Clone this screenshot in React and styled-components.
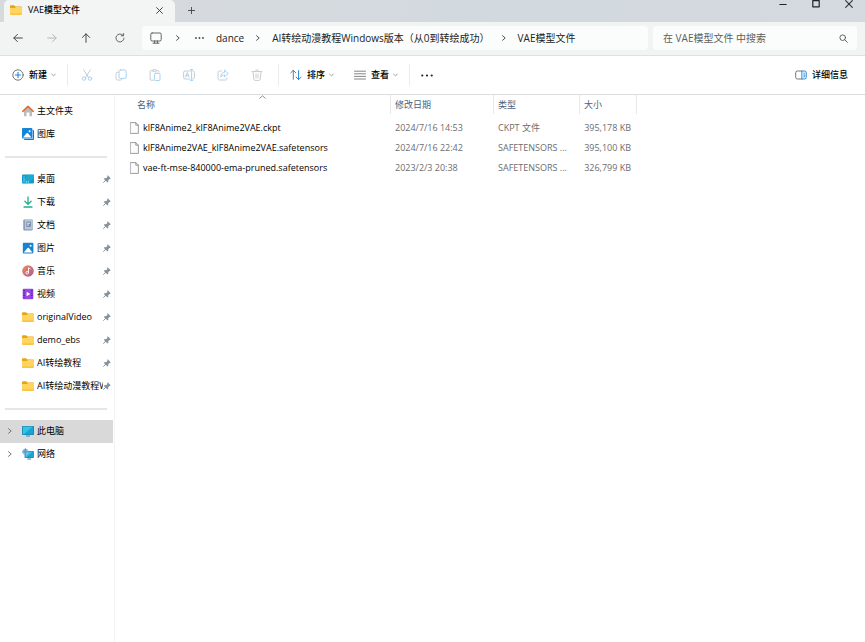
import React from "react";
import styled, { createGlobalStyle } from "styled-components";

const GlobalStyle = createGlobalStyle`
  * { box-sizing: border-box; }
  html, body { margin: 0; background: #fff; }
  body, button, input {
    font-family: "Open Sans", "Noto Sans CJK SC", sans-serif;
    font-size: 9px;
    line-height: 14px;
    color: #000;
  }
  button { border: 0; padding: 0; background: none; }
  svg { display: block; flex: none; }
`;

const Window = styled.div`
  display: flex;
  flex-direction: column;
  min-height: 100vh;
`;

const TitleBar = styled.header`
  display: flex;
  height: 22px;
  padding-left: 4px;
  background: linear-gradient(90deg, #d7dadc, #d2d9df 60%, #d5d9e0);
`;

const Tab = styled.div`
  display: flex;
  align-items: center;
  width: 171px;
  padding: 0 10px 2px 6px;
  gap: 6px;
  background: #f3f4f4;
  border-radius: 5px 5px 0 0;
  font-weight: 500;
`;

const TabTitle = styled.span`
  flex: 1;
  white-space: nowrap;
`;

const TabButton = styled.button`
  display: grid;
  place-items: center;
  width: ${(p) => p.$width}px;
  height: 20px;
`;

const WindowControls = styled.div`
  display: flex;
  height: 8px;
  margin-left: auto;
`;

const WindowButton = styled.button`
  display: grid;
  place-items: center;
  width: 33px;
  height: 8px;
`;

const NavBar = styled.nav`
  display: flex;
  align-items: center;
  gap: 5px;
  height: 34px;
  padding: 0 8px 1px 1px;
  background: #f2f4f4;
  border-bottom: 1px solid #dde1e4;
`;

const NavButtons = styled.div`
  display: flex;
`;

const NavButton = styled.button`
  display: grid;
  place-items: center;
  width: 34px;
  height: 24px;
`;

const AddressBar = styled.div`
  display: flex;
  align-items: center;
  flex: 1;
  min-width: 0;
  height: 24px;
  padding-left: 8px;
  overflow: hidden;
  background: #fbfdfc;
  border-radius: 4px;
`;

const Crumb = styled.a`
  color: #222;
  font-size: 10px;
  text-decoration: none;
  white-space: nowrap;
`;

const CrumbArrow = styled.span`
  display: grid;
  place-items: center;
  width: ${(p) => p.$width || 28}px;
  flex: none;
`;

const SearchBox = styled.label`
  display: flex;
  align-items: center;
  flex: 0 0 204px;
  height: 24px;
  padding: 0 9px 0 10px;
  background: #fbfdfc;
  border-radius: 4px;
`;

const SearchInput = styled.input`
  flex: 1;
  min-width: 0;
  padding: 0;
  border: 0;
  outline: 0;
  background: none;
  font-size: 10px;
  &::placeholder { color: #5d5d5d; opacity: 1; }
`;

const Toolbar = styled.div`
  display: flex;
  align-items: center;
  height: 39px;
  padding: 0 17px 0 12px;
  border-bottom: 1px solid #dadde0;
`;

const MenuButton = styled.button`
  display: flex;
  align-items: center;
  gap: 4px;
  height: 24px;
  margin-right: ${(p) => p.$after || 0}px;
  font-weight: 500;
  white-space: nowrap;
  & > svg:first-child { margin-right: 1px; }
`;

const ToolDivider = styled.span`
  width: 1px;
  height: 22px;
  margin-right: ${(p) => p.$after}px;
  background: #ececec;
`;

const ToolGroup = styled.div`
  display: flex;
  margin-right: 4px;
`;

const ToolButton = styled.button`
  display: grid;
  place-items: center;
  width: 34px;
  height: 24px;
`;

const Spacer = styled.div`
  flex: 1;
`;

const Body = styled.div`
  display: flex;
  flex: 1;
`;

const Sidebar = styled.aside`
  flex: none;
  width: 115px;
  padding: 5px 1px 5px 0;
  border-right: 1px solid #f4f4f4;
`;

const SideRow = styled.a`
  display: grid;
  grid-template-columns: 15px 15px minmax(0, 1fr) 8px;
  align-items: center;
  height: 23px;
  padding: 0 2px 1px 7px;
  background: ${(p) => (p.$selected ? "#d9d9d9" : "transparent")};
  color: #000;
  text-decoration: none;
`;

const SideLabel = styled.span`
  overflow: hidden;
  white-space: nowrap;
`;

const SideDivider = styled.hr`
  height: 2px;
  margin: 10px 6px 10px 5px;
  border: 0;
  background: #e6e6e6;
`;

const Main = styled.main`
  flex: 1;
  min-width: 0;
`;

const FileTable = styled.table`
  width: 100%;
  table-layout: fixed;
  border-collapse: collapse;
`;

const Column = styled.col`
  width: ${(p) => (p.$width ? `${p.$width}px` : "auto")};
`;

const HeadCell = styled.th`
  height: 23px;
  padding: 3px 0 6px ${(p) => p.$indent || 4}px;
  background: linear-gradient(#e8e8e8, #e8e8e8) right top / 1px 19px no-repeat;
  color: #4c607a;
  font-weight: 400;
  text-align: left;
  vertical-align: top;
  position: relative;
`;

const SortMark = styled.span`
  position: absolute;
  top: 0;
  left: 0;
  right: 0;
  display: flex;
  justify-content: center;
  padding-left: 19px;
`;

const Cell = styled.td`
  height: 20px;
  padding: 0 6px 0 4px;
  overflow: hidden;
  color: #6d6d6d;
  text-align: ${(p) => p.$align || "left"};
  white-space: nowrap;
`;

const NameCell = styled(Cell)`
  padding-left: 15px;
  color: #000;
`;

const FileName = styled.span`
  display: flex;
  align-items: center;
  gap: 4px;
`;

const Svg = ({ w = 12, h = w, box, children, ...rest }) => (
  <svg width={w} height={h} viewBox={box || `0 0 ${w} ${h}`} fill="none" strokeLinecap="round" strokeLinejoin="round" aria-hidden="true" {...rest}>
    {children}
  </svg>
);

const Chevron = ({ color = "#555", size = 6 }) => (
  <Svg w={size} box="0 0 6 6" stroke={color}><path d="M1.5.7 4.2 3 1.5 5.3" /></Svg>
);
const Caret = () => (
  <Svg w={5} h={4} stroke="#888" strokeWidth=".8"><path d="M.6 1 2.5 2.9 4.4 1" /></Svg>
);
const Cross = ({ size = 7, width = 0.9 }) => (
  <Svg w={size} box="0 0 7 7" stroke="#333" strokeWidth={width}><path d="m.6.6 5.8 5.8M6.4.6.6 6.4" /></Svg>
);

const FolderIcon = () => (
  <Svg box="0 0 12 12">
    <path d="M0 2.2Q0 1.2 1 1.2h3l1.5 1.4H11q1 0 1 1V5H0z" fill="#e6a416" />
    <path d="M0 4h5l1-.9h5q1 0 1 1v5.7q0 1-1 1H1q-1 0-1-1z" fill="#ffd45f" />
    <path d="M0 9.6q0 1.2 1 1.2h10q1 0 1-1.2z" fill="#f6bd37" />
  </Svg>
);
const HomeIcon = () => (
  <Svg box="0 0 12 12">
    <path d="M2 5.2 6 2l4 3.2v6H7.5V7.4h-3v3.8H2z" fill="#b9bcc0" />
    <path d="M.8 6.3 6 1.4l5.2 4.9" stroke="#e2702b" strokeWidth="1.6" />
  </Svg>
);
const GalleryIcon = () => (
  <Svg box="0 0 12 12">
    <rect x="2" y="2" width="10" height="10" rx="1" fill="#1672c8" />
    <rect x="1.9" y="1.9" width="9" height="9.1" rx="1" fill="#e8f3fc" />
    <rect width="10.4" height="10.6" rx="1" fill="#1685d8" />
    <path d="M1 9.6 4.6 5.2q.7-.6 1.4 0l3.4 4.4z" fill="#fff" />
    <circle cx="7.6" cy="3.2" r="1" fill="#fff" />
  </Svg>
);
const PicturesIcon = () => (
  <Svg box="0 0 12 12">
    <rect x=".8" y=".8" width="10.6" height="10.6" rx="1" fill="#1683d6" />
    <path d="M1.8 10.5 5.5 6q.7-.6 1.4 0l3.5 4.5z" fill="#fff" />
    <circle cx="8.6" cy="3.7" r="1" fill="#fff" />
  </Svg>
);
const DesktopIcon = () => (
  <Svg box="0 0 12 12">
    <rect y="1.6" width="12" height="9" rx="1" fill="#129bc9" />
    <path d="M6 1.6h5q1 0 1 1v3L5 10.6H1q-1 0-1-1z" fill="#27b7dc" opacity=".5" />
    <path d="M1.5 4h1M1.5 6h1M1.5 8h1M4 8.9h1M6 8.9h1" stroke="#d6f6ff" strokeWidth=".9" strokeLinecap="butt" />
  </Svg>
);
const DownloadIcon = () => (
  <Svg box="0 0 12 12" stroke="#1fae8a" strokeWidth="1.3"><path d="M6 1v7.2M2.9 5.3 6 8.4l3.1-3.1M2 11h8" /></Svg>
);
const DocIcon = () => (
  <Svg box="0 0 12 12">
    <rect x="1.3" y=".6" width="9.4" height="11" rx="1" fill="#8097b5" />
    <rect x="2.8" y=".6" width="7.9" height="10" rx=".6" fill="#b8c7da" />
    <rect x="4.4" y="2.6" width="4.4" height="5.2" fill="#6f87a6" />
    <path d="M5.4 4.2h2.2M5.4 6h1.2" stroke="#fff" strokeWidth=".9" />
  </Svg>
);
const MusicIcon = () => (
  <Svg box="0 0 12 12">
    <defs><linearGradient id="music" x1="0" y1="0" x2="1" y2="1"><stop stopColor="#ef8a56" /><stop offset="1" stopColor="#ad5a96" /></linearGradient></defs>
    <circle cx="6" cy="6" r="5.8" fill="url(#music)" />
    <circle cx="5.2" cy="7.7" r="1.3" stroke="#fff" strokeWidth=".9" />
    <path d="M6.5 7.6V2.7l1.6 1.2" stroke="#fff" strokeWidth=".9" />
  </Svg>
);
const VideoIcon = () => (
  <Svg box="0 0 12 12">
    <rect x=".7" y=".7" width="10.6" height="10.6" rx="1" fill="#9747e6" />
    <path d="M2.1 2v8M9.9 2v8" stroke="#3f1a78" strokeWidth="1.1" strokeDasharray="1.2 1.2" strokeLinecap="butt" />
    <path d="M4.6 3.7 8.2 6 4.6 8.3z" fill="#fff" />
  </Svg>
);
const Screen = ({ x, y, w, h }) => (
  <>
    <path d={`M${x + w / 2 - 1.5} ${y + h + 1}h3`} stroke="#3486a8" />
    <rect x={x} y={y} width={w} height={h} rx=".7" fill="#1378ae" />
    <path d={`M${x + 0.6} ${y + 0.6}h${w - 1.2}L${x + 2} ${y + h - 0.6}H${x + 0.6}z`} fill="#35c3e2" />
    <path d={`M${x + w - 0.6} ${y + 0.6}v${h - 1.2}H${x + 2}z`} fill="#1ba4d0" />
  </>
);
const PcIcon = () => <Svg box="0 0 12 12"><Screen x={0} y={1} w={12} h={9} /></Svg>;
const NetworkIcon = () => (
  <Svg box="0 0 12 12">
    <Screen x={2.6} y={3} w={9.2} h={7} />
    <circle cx="3.4" cy="3.8" r="3.1" fill="#8cc5e4" />
    <path d="M.4 3.8h6M3.4.8q-1.8 3 0 6 1.8-3 0-6" stroke="#3c86b8" strokeWidth=".6" />
  </Svg>
);
const PinIcon = () => (
  <Svg w={8} box="0 0 8 8">
    <path d="M4.7.3 7.7 3.3l-.7.7-.5-.1-1.3 1.4.1 1.5-.8.7L.9 3.9l.8-.8 1.4.1 1.4-1.4L4.1 1z" fill="#87929b" />
    <path d="M2.7 5.2.6 7.4" stroke="#87929b" />
  </Svg>
);
const FileIcon = () => (
  <Svg w={9} h={12} stroke="#858585" strokeWidth=".8">
    <path d="M.6.6h5.2l2.6 2.6v8.2H.6z" fill="#fcfcfc" /><path d="M5.8.6v2.6h2.6" />
  </Svg>
);

const G = "#c3c6c9";
const B = "#9ccff4";
const CutIcon = () => (
  <Svg strokeWidth=".9"><path d="m2.6.8 5 8M9.4.8l-5 8" stroke={G} /><circle cx="3" cy="9.6" r="1.7" stroke={B} /><circle cx="9" cy="9.6" r="1.7" stroke={B} /></Svg>
);
const CopyIcon = () => (
  <Svg strokeWidth=".9"><path d="M3.4 3.3H2.3Q1 3.3 1 4.6v5Q1 11 2.4 11h3.2q1.3 0 1.4-1" stroke={G} /><rect x="4" y="1" width="7.2" height="8.4" rx="1.4" stroke={B} /></Svg>
);
const PasteIcon = () => (
  <Svg strokeWidth=".9"><path d="M4.6 11.2H2.2q-1 0-1-1V2.6q0-1 1-1h1.6m3.4 0h1.6q1 0 1 1v.5" stroke={G} /><rect x="3.6" y=".6" width="3.8" height="2" rx=".8" stroke={G} /><rect x="5.6" y="4.3" width="5.4" height="7.2" rx="1" stroke={B} /></Svg>
);
const RenameIcon = () => (
  <Svg strokeWidth=".9"><path d="M7 2H2Q.6 2 .6 3.4v5Q.6 10 2 10h5m3-8q1.4 0 1.4 1.4v5Q11.4 10 10 10" stroke={G} /><path d="M7.4.6h2.4M7.4 11.4h2.4M8.6.6v10.8M2.5 8l1.8-4.4L6.1 8M3.1 6.7h2.4" stroke={B} /></Svg>
);
const ShareIcon = () => (
  <Svg strokeWidth=".9"><path d="M4.4 2H2.6Q1 2 1 3.6v5.8Q1 11 2.6 11h5.8q1.6 0 1.6-1.6V8.7" stroke={G} /><path d="M7.5 1.2 11.3 4.5 7.5 7.8V5.9Q5 5.7 3.7 8.2 4 3.5 7.5 3.1z" stroke={B} /></Svg>
);
const TrashIcon = () => (
  <Svg strokeWidth=".9" stroke={G}><path d="M1 2.6h10M4.4 2.4Q4.6.8 6 .8t1.6 1.6M2 2.8l.8 7.4q.1 1.2 1.3 1.2h3.8q1.2 0 1.3-1.2l.8-7.4M5 5v4M7 5v4" /></Svg>
);

const quickLinks = [
  ["桌面", DesktopIcon],
  ["下载", DownloadIcon],
  ["文档", DocIcon],
  ["图片", PicturesIcon],
  ["音乐", MusicIcon],
  ["视频", VideoIcon],
  ["originalVideo", FolderIcon],
  ["demo_ebs", FolderIcon],
  ["AI转绘教程", FolderIcon],
  ["AI转绘动漫教程W", FolderIcon],
];

const files = [
  ["klF8Anime2_klF8Anime2VAE.ckpt", "2024/7/16 14:53", "CKPT 文件", "395,178 KB"],
  ["klF8Anime2VAE_klF8Anime2VAE.safetensors", "2024/7/16 22:42", "SAFETENSORS ...", "395,100 KB"],
  ["vae-ft-mse-840000-ema-pruned.safetensors", "2023/2/3 20:38", "SAFETENSORS ...", "326,799 KB"],
];

const tools = [
  ["剪切", CutIcon],
  ["复制", CopyIcon],
  ["粘贴", PasteIcon],
  ["重命名", RenameIcon],
  ["共享", ShareIcon],
  ["删除", TrashIcon],
];

function SideItem({ label, icon: Icon, pinned, expandable, selected }) {
  return (
    <SideRow href="#" $selected={selected}>
      <span>{expandable && <Chevron color="#777" />}</span>
      <Icon />
      <SideLabel>{label}</SideLabel>
      {pinned && <PinIcon />}
    </SideRow>
  );
}

export default function App() {
  return (
    <Window>
      <GlobalStyle />
      <TitleBar>
        <Tab>
          <FolderIcon />
          <TabTitle>VAE模型文件</TabTitle>
          <TabButton $width={12} aria-label="关闭标签页"><Cross /></TabButton>
        </Tab>
        <TabButton $width={33} aria-label="新建标签页">
          <Svg w={7} stroke="#444" strokeWidth=".9"><path d="M3.5.3v6.4M.3 3.5h6.4" /></Svg>
        </TabButton>
        <WindowControls>
          <WindowButton aria-label="最小化"><Svg w={8} stroke="#222"><path d="M.8 4.5h6.4" /></Svg></WindowButton>
          <WindowButton aria-label="最大化"><Svg w={8} stroke="#222" strokeWidth="1.2"><rect x=".8" y=".6" width="6.4" height="6.2" /></Svg></WindowButton>
          <WindowButton aria-label="关闭"><Cross size={8} width={1} /></WindowButton>
        </WindowControls>
      </TitleBar>

      <NavBar>
        <NavButtons>
          <NavButton aria-label="后退"><Svg w={10} stroke="#444"><path d="M9.3 5H.9M4.4 1.4.8 5l3.6 3.6" /></Svg></NavButton>
          <NavButton aria-label="前进"><Svg w={10} stroke="#b5b7b8"><path d="M.7 5h8.4M5.6 1.4 9.2 5 5.6 8.6" /></Svg></NavButton>
          <NavButton aria-label="向上"><Svg w={10} stroke="#444"><path d="M5 9.3V.9M1.4 4.4 5 .8l3.6 3.6" /></Svg></NavButton>
          <NavButton aria-label="刷新"><Svg w={10} stroke="#555" strokeWidth=".9"><path d="M9 5.2A4 4 0 1 1 7.9 2.2M8.6.5v2.3H6.3" /></Svg></NavButton>
        </NavButtons>
        <AddressBar>
          <Svg stroke="#555" strokeWidth=".9"><rect x=".8" y="1" width="10.4" height="8" rx="1.3" /><path d="M4.6 9v2M7.4 9v2M3 11.2h6" /></Svg>
          <CrumbArrow $width={32}><Chevron /></CrumbArrow>
          <CrumbArrow $width={10}><Svg w={9} h={2}><g fill="#444"><circle cx="1" cy="1" r=".9" /><circle cx="4.5" cy="1" r=".9" /><circle cx="8" cy="1" r=".9" /></g></Svg></CrumbArrow>
          <CrumbArrow $width={12} />
          <Crumb href="#">dance</Crumb>
          <CrumbArrow><Chevron /></CrumbArrow>
          <Crumb href="#">AI转绘动漫教程Windows版本（从0到转绘成功）</Crumb>
          <CrumbArrow><Chevron /></CrumbArrow>
          <Crumb href="#">VAE模型文件</Crumb>
        </AddressBar>
        <SearchBox>
          <SearchInput type="text" placeholder="在 VAE模型文件 中搜索" aria-label="搜索" />
          <Svg w={9} stroke="#555" strokeWidth=".9"><circle cx="3.7" cy="3.7" r="2.8" /><path d="m5.8 5.8 2.6 2.6" /></Svg>
        </SearchBox>
      </NavBar>

      <Toolbar>
        <MenuButton $after={11}>
          <Svg><circle cx="6" cy="6" r="5.2" stroke="#666" strokeWidth=".9" /><path d="M6 3.4v5.2M3.4 6h5.2" stroke="#2487d6" strokeWidth="1.1" /></Svg>
          新建<Caret />
        </MenuButton>
        <ToolDivider $after={2} />
        <ToolGroup>
          {tools.map(([label, Icon]) => (
            <ToolButton key={label} aria-label={label}><Icon /></ToolButton>
          ))}
        </ToolGroup>
        <ToolDivider $after={11} />
        <MenuButton $after={20}>
          <Svg strokeWidth="1"><path d="M3.3 10.3V1.4M.8 3.8l2.5-2.5 2.5 2.5" stroke="#777" /><path d="M8.6 1.6v8.9M6.1 8.1l2.5 2.5 2.5-2.5" stroke="#2487d6" /></Svg>
          排序<Caret />
        </MenuButton>
        <MenuButton $after={11}>
          <Svg stroke="#777" strokeWidth=".9"><path d="M.5 2.2h11M.5 4.8h11M.5 7.4h11M.5 10h11" /></Svg>
          查看<Caret />
        </MenuButton>
        <ToolDivider $after={0} />
        <ToolButton aria-label="更多"><Svg w={12} h={3}><g fill="#222"><circle cx="1.3" cy="1.5" r="1.1" /><circle cx="6" cy="1.5" r="1.1" /><circle cx="10.7" cy="1.5" r="1.1" /></g></Svg></ToolButton>
        <Spacer />
        <MenuButton>
          <Svg strokeWidth=".9"><path d="M7 2H2.4Q.7 2 .7 3.7v4.6Q.7 10 2.4 10H7" stroke="#666" /><path d="M7.2 2h2.4q1.7 0 1.7 1.7v4.6q0 1.7-1.7 1.7H7.2z" fill="#d9edfb" stroke="#2487d6" /><path d="M9.2 4.2v.2M9.2 5.8v2" stroke="#2487d6" /></Svg>
          详细信息
        </MenuButton>
      </Toolbar>

      <Body>
        <Sidebar>
          <SideItem label="主文件夹" icon={HomeIcon} />
          <SideItem label="图库" icon={GalleryIcon} />
          <SideDivider />
          {quickLinks.map(([label, icon]) => (
            <SideItem key={label} label={label} icon={icon} pinned />
          ))}
          <SideDivider />
          <SideItem label="此电脑" icon={PcIcon} expandable selected />
          <SideItem label="网络" icon={NetworkIcon} expandable />
        </Sidebar>
        <Main>
          <FileTable>
            <colgroup>
              <Column $width={276} />
              <Column $width={103} />
              <Column $width={86} />
              <Column $width={57} />
              <Column />
            </colgroup>
            <thead>
              <tr>
                <HeadCell $indent={22} aria-sort="ascending">
                  <SortMark><Svg w={7} h={4} stroke="#777" strokeWidth=".8"><path d="M.8 3.2 3.5.8l2.7 2.4" /></Svg></SortMark>
                  名称
                </HeadCell>
                <HeadCell>修改日期</HeadCell>
                <HeadCell>类型</HeadCell>
                <HeadCell>大小</HeadCell>
              </tr>
            </thead>
            <tbody>
              {files.map(([name, date, type, size]) => (
                <tr key={name}>
                  <NameCell><FileName><FileIcon />{name}</FileName></NameCell>
                  <Cell>{date}</Cell>
                  <Cell>{type}</Cell>
                  <Cell $align="right">{size}</Cell>
                </tr>
              ))}
            </tbody>
          </FileTable>
        </Main>
      </Body>
    </Window>
  );
}
